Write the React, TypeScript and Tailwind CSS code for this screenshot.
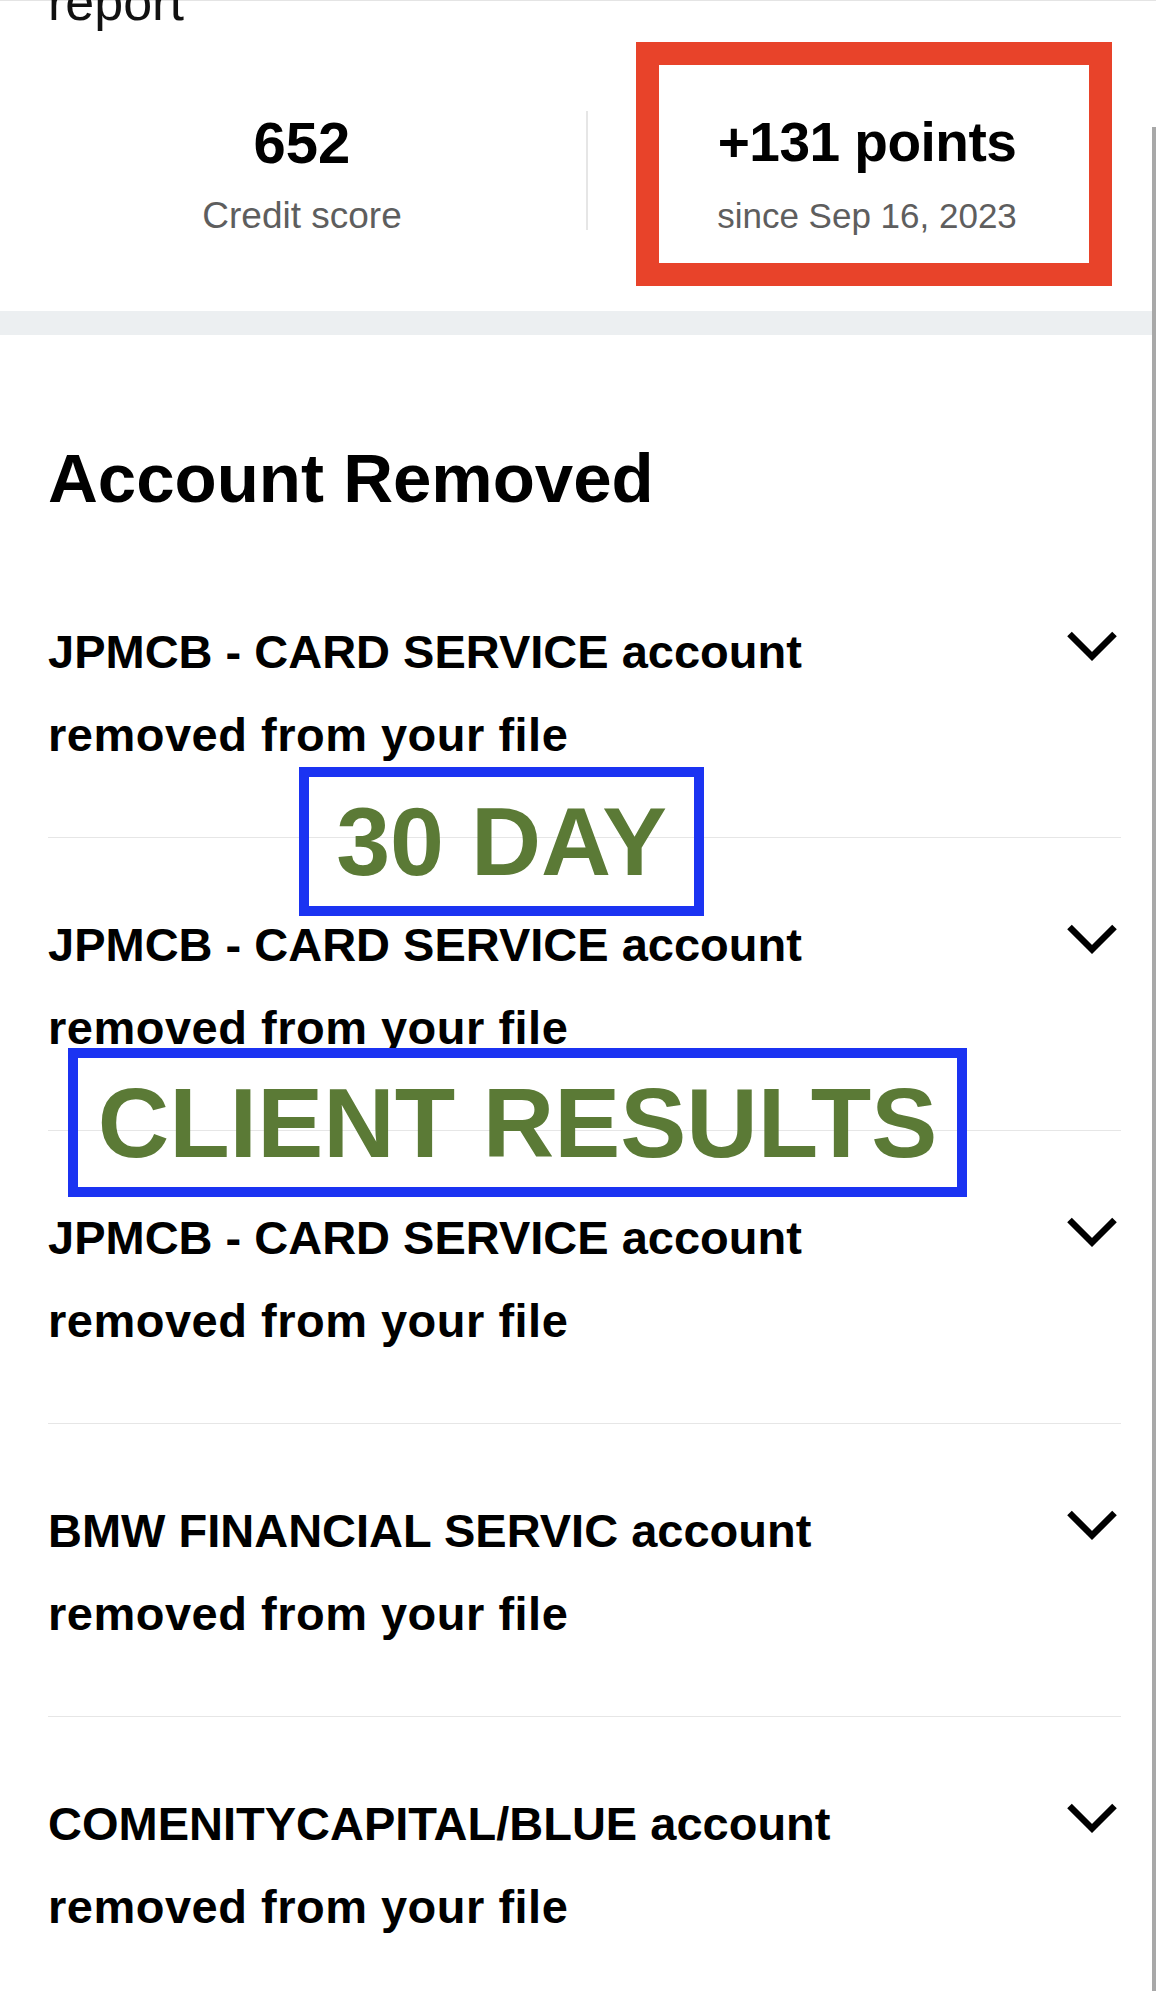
import React from "react";

const rows = [
  "JPMCB - CARD SERVICE account",
  "JPMCB - CARD SERVICE account",
  "JPMCB - CARD SERVICE account",
  "BMW FINANCIAL SERVIC account",
  "COMENITYCAPITAL/BLUE account",
];

function Chevron() {
  return (
    <svg className="mt-[21px] mr-[4px] shrink-0" width="50" height="31" viewBox="0 0 50 31" fill="none">
      <path d="M2.5 3 L25 25.5 L47.5 3" stroke="#000" strokeWidth={6.5} strokeLinejoin="miter" />
    </svg>
  );
}

export default function App() {
  return (
    <div className="relative h-[1991px] w-full overflow-hidden bg-white text-black font-['Liberation_Sans',Arial,sans-serif]">
      {/* header bottom edge */}
      <div className="h-px w-full bg-[#e4e4e4]" />

      <p className="-mt-[25px] pl-[48px] text-[52px] leading-[52px] text-[#111]">report</p>

      {/* score summary */}
      <div className="mt-[83px] flex h-[200px] items-start">
        <div className="ml-[32px] flex w-[540px] flex-col items-center pt-[3px]">
          <div className="text-[58px] leading-[57px] font-bold">652</div>
          <div className="mt-[27px] text-[37px] leading-[35px] text-[#5e5e5e]">Credit score</div>
        </div>
        <div className="ml-[14px] h-[119px] w-[2px] bg-[#e6e6e6]" />
        <div className="mr-[10px] flex flex-1 flex-col items-center pt-[3px]">
          <div className="text-[55px] leading-[57px] font-bold tracking-[-0.5px]">+131 points</div>
          <div className="mt-[27px] text-[35px] leading-[35px] text-[#5e5e5e]">since Sep 16, 2023</div>
        </div>
      </div>

      <div className="h-[24px] w-full bg-[#eceff1]" />

      <h2 className="mt-[109px] pl-[48px] text-[69px] leading-[69px] font-bold">Account Removed</h2>

      <div className="mt-[32px] ml-[48px] mr-[35px]">
        {rows.map((name, i) => (
          <div key={i} className="flex items-start justify-between border-b border-[#e6e6e6] pt-[65px] pb-[61px]">
            <div className="text-[47px] leading-[83px] font-bold">
              <span className="block whitespace-nowrap">{name}</span>
              <span className="block whitespace-nowrap tracking-[0.5px]">removed from your file</span>
            </div>
            <Chevron />
          </div>
        ))}
      </div>

      {/* annotation overlays */}
      <div className="absolute left-[636px] top-[42px] h-[244px] w-[476px] border-[23px] border-[#e8432a]" />

      <div className="absolute left-[299px] top-[767px] flex h-[149px] w-[405px] items-center justify-center border-[10px] border-[#1b33f2]">
        <span className="whitespace-nowrap text-[97px] leading-none font-bold text-[#5b7a36]">30 DAY</span>
      </div>

      <div className="absolute left-[68px] top-[1048px] flex h-[149px] w-[899px] items-center justify-center border-[10px] border-[#1b33f2]">
        <span className="whitespace-nowrap text-[99px] leading-none font-bold text-[#5b7a36]">CLIENT RESULTS</span>
      </div>

      {/* scroll indicator */}
      <div className="absolute right-0 top-[127px] bottom-0 w-[4px] bg-[#a8a8a8]" />
    </div>
  );
}
